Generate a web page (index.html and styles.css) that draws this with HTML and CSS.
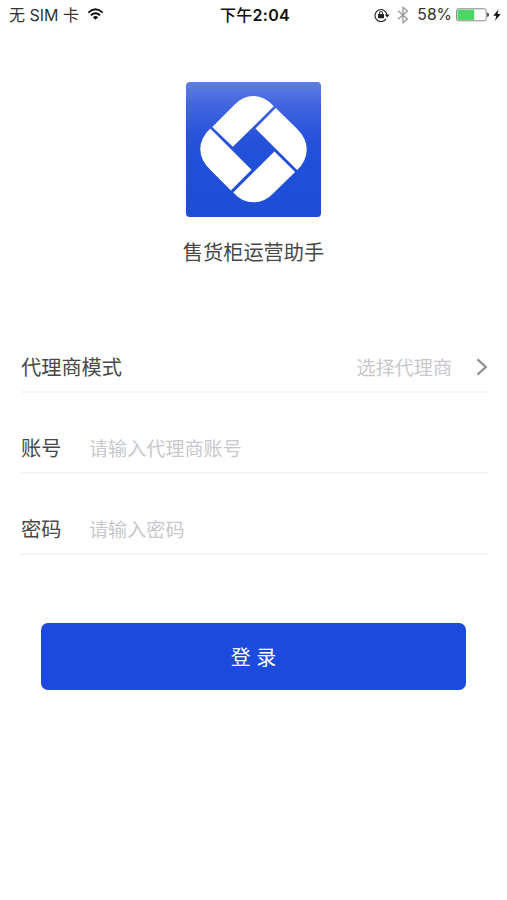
FILE: index.html
```html
<!DOCTYPE html>
<html lang="zh-CN">
<head>
<meta charset="utf-8">
<title>售货柜运营助手</title>
<link rel="stylesheet" href="styles.css">
</head>
<body>
<header class="status">
  <div class="status-left">
    <span class="carrier">无 SIM 卡</span>
    <svg class="wifi" viewBox="0 0 18 13" width="17" height="12">
      <g fill="none" stroke="#111" stroke-width="2">
        <path d="M1.2 5Q9 -2.2 16.8 5"/>
        <path d="M4 7.9Q9 3.4 14 7.9"/>
      </g>
      <path d="M6.1 9.9Q9 7.5 11.9 9.9L9 12.7Z" fill="#111"/>
    </svg>
  </div>
  <span class="time"><span class="period">下午</span>2:04</span>
  <div class="status-right">
    <svg class="lock" viewBox="0 0 16 14" width="16" height="14">
      <path d="M12.1 10.8A6 6 0 1 1 13 7" fill="none" stroke="#222" stroke-width="1.1"/>
      <path d="M10.7 6.6H15.7L13.2 9.5Z" fill="#222"/>
      <rect x="4" y="6" width="6" height="4.2" rx=".5" fill="#222"/>
      <path d="M5.4 6.5V5.1a1.6 1.6 0 0 1 3.2 0V6.5" fill="none" stroke="#222" stroke-width="1"/>
    </svg>
    <svg class="bluetooth" viewBox="0 0 12 18" width="12" height="18">
      <path d="M1 4.8L10.5 13L6 16.7V1.3L10.5 5L1 13.2" fill="none" stroke="#999" stroke-width="1.3"/>
    </svg>
    <span class="percent">58%</span>
    <svg class="battery" viewBox="0 0 33 14" width="33" height="14">
      <rect x=".6" y=".8" width="29.6" height="12" rx="1.6" fill="#fff" stroke="#888" stroke-width="1"/>
      <path d="M1.5 1.7H18.2V11.9H1.5Z" fill="#4bd763"/>
      <path d="M31.2 4.6Q33 5 33 6.8T31.2 9Z" fill="#333"/>
    </svg>
    <svg class="bolt" viewBox="0 0 8 12" width="8" height="12">
      <path d="M5.6 .3L.3 6.8H3.4L2 11.7L7.7 5H4.5Z" fill="#111"/>
    </svg>
  </div>
</header>
<main>
  <div class="brand">
    <svg class="logo" viewBox="19 20 406 406" width="135" height="135">
      <defs>
        <linearGradient id="sky" x1="0" y1="0" x2="0" y2="1">
          <stop offset="0" stop-color="#5f7fe5"/>
          <stop offset=".15" stop-color="#4467df"/>
          <stop offset=".4" stop-color="#2853da"/>
          <stop offset=".6" stop-color="#204fd9"/>
          <stop offset="1" stop-color="#1e4dd8"/>
        </linearGradient>
      </defs>
      <rect x="19" y="20" width="406" height="406" rx="11" fill="url(#sky)"/>
      <g fill="#fff">
        <path d="M98 155L164 89Q190 62 222 62Q256 62 283 93L160 215Z"/>
        <path d="M289 98L352 160Q382 190 382 222Q382 258 353 285L228 160Z"/>
        <path d="M347 291L281 355Q255 382 222 382Q188 382 161 352L285 229Z"/>
        <path d="M154 346L92 284Q62 254 62 222Q62 188 92 160L216 284Z"/>
      </g>
    </svg>
    <h1>售货柜运营助手</h1>
  </div>
  <form class="form">
    <div class="row">
      <span class="label">代理商模式</span>
      <span class="choice">选择代理商</span>
      <svg class="chevron" viewBox="0 0 12 18" width="12" height="18">
        <path d="M1.5 1.3L9.8 9L1.5 16.7" fill="none" stroke="#919191" stroke-width="2.3"/>
      </svg>
    </div>
    <div class="row">
      <span class="label short">账号</span>
      <span class="hint">请输入代理商账号</span>
    </div>
    <div class="row">
      <span class="label short">密码</span>
      <span class="hint">请输入密码</span>
    </div>
    <button class="login" type="button">登 录</button>
  </form>
</main>
</body>
</html>
```

FILE: styles.css
```css
* { box-sizing: border-box; }
body {
  margin: 0;
  min-height: 900px;
  background: #fff;
  color: #484848;
  font-family: Inter, "Noto Sans CJK SC", sans-serif;
}
.status {
  display: grid;
  grid-template-columns: 1fr auto 1fr;
  align-items: center;
  height: 30px;
  padding: 0 6px 0 9px;
  color: #333;
  font-size: 16px;
  line-height: 30px;
  white-space: nowrap;
}
.status-left, .status-right { display: flex; align-items: center; }
.status-right { justify-content: flex-end; }
.wifi { margin: 0 0 2px 8px; }
.time { font-weight: 600; color: #111; letter-spacing: .25px; }
.period { font-weight: 500; }
.lock { margin-bottom: 1px; }
.bluetooth { margin: 0 8px 0 7px; }
.percent { margin-right: 4px; font-size: 15.7px; }
.bolt { margin-left: 4px; }
.brand {
  display: flex;
  flex-direction: column;
  align-items: center;
  padding-top: 52px;
}
.logo { display: block; }
h1 {
  margin: 21px 0 0;
  font-size: 20.2px;
  font-weight: 400;
  line-height: 30px;
}
.form { padding: 44px 19px 0 21px; }
.row {
  display: flex;
  align-items: center;
  height: 81px;
  padding-top: 30px;
  border-bottom: 2px solid #f5f5f5;
}
.label { font-size: 20.2px; }
.short { width: 68px; }
.choice, .hint { font-size: 19.1px; color: #c8c8cc; }
.choice { margin-left: auto; }
.chevron { margin-left: 24px; }
.login {
  display: block;
  width: 425px;
  height: 67px;
  margin: 68px 0 0 20px;
  padding: 3px 0 0;
  border: 0;
  border-radius: 7px;
  background: #1c4adc;
  color: #fff;
  font: 20px/64px Inter, "Noto Sans CJK SC", sans-serif;
}
```
